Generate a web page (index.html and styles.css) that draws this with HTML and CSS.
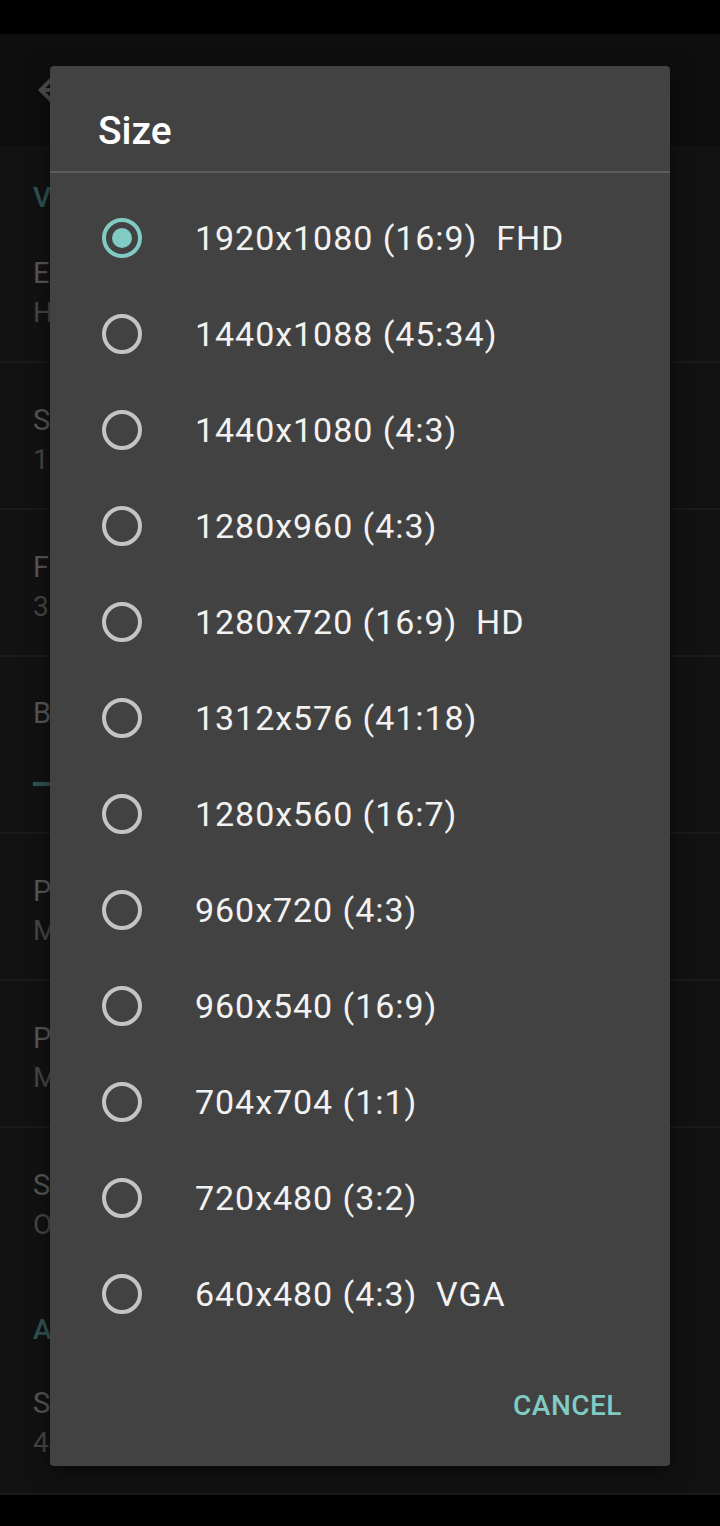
FILE: index.html
```html
<!DOCTYPE html>
<html lang="en">
<head>
<meta charset="UTF-8" />
<meta name="viewport" content="width=device-width, initial-scale=1" />
<title>Video settings</title>
<link rel="stylesheet" href="styles.css">
</head>
<body>

<div class="status-bar"></div>

<!-- App bar (dimmed behind dialog) -->
<header class="app-bar">
  <svg class="back-icon" viewBox="0 0 24 24" fill="#4f4f4f">
    <path d="M20 11H7.83l5.59-5.59L12 4l-8 8 8 8 1.41-1.41L7.83 13H20v-2z"/>
  </svg>
  <span class="app-title">Video settings</span>
</header>

<main class="settings">
  <div class="section-head first">Video</div>
  <div class="pref"><div class="pref-title">Encoder</div><div class="pref-sub">H.264</div></div>
  <div class="pref"><div class="pref-title">Size</div><div class="pref-sub">1920x1080</div></div>
  <div class="pref"><div class="pref-title">Frame rate</div><div class="pref-sub">30 fps</div></div>
  <div class="pref tall">
    <div class="pref-title">Bitrate</div>
    <div class="slider"><span class="slider-track"></span><span class="slider-thumb"></span></div>
  </div>
  <div class="pref"><div class="pref-title">Profile</div><div class="pref-sub">Main</div></div>
  <div class="pref"><div class="pref-title">Preview format</div><div class="pref-sub">MJPEG</div></div>
  <div class="pref last"><div class="pref-title">Stabilization</div><div class="pref-sub">Off</div></div>
  <div class="section-head">Audio</div>
  <div class="pref last"><div class="pref-title">Sample rate</div><div class="pref-sub">44100 Hz</div></div>
</main>

<div class="nav-bar"></div>

<!-- Size dialog -->
<div class="dialog">
  <h2 class="dialog-title">Size</h2>
  <ul class="options">
    <li class="option checked"><span class="radio"></span><span class="label">1920x1080 (16:9)  FHD</span></li>
    <li class="option"><span class="radio"></span><span class="label">1440x1088 (45:34)</span></li>
    <li class="option"><span class="radio"></span><span class="label">1440x1080 (4:3)</span></li>
    <li class="option"><span class="radio"></span><span class="label">1280x960 (4:3)</span></li>
    <li class="option"><span class="radio"></span><span class="label">1280x720 (16:9)  HD</span></li>
    <li class="option"><span class="radio"></span><span class="label">1312x576 (41:18)</span></li>
    <li class="option"><span class="radio"></span><span class="label">1280x560 (16:7)</span></li>
    <li class="option"><span class="radio"></span><span class="label">960x720 (4:3)</span></li>
    <li class="option"><span class="radio"></span><span class="label">960x540 (16:9)</span></li>
    <li class="option"><span class="radio"></span><span class="label">704x704 (1:1)</span></li>
    <li class="option"><span class="radio"></span><span class="label">720x480 (3:2)</span></li>
    <li class="option"><span class="radio"></span><span class="label">640x480 (4:3)  VGA</span></li>
  </ul>
  <div class="dialog-actions">
    <button class="text-btn">CANCEL</button>
  </div>
</div>

</body>
</html>
```

FILE: styles.css
```css
/* Page frame */
* {
  box-sizing: border-box;
}

body {
  margin: 0;
  width: 720px;
  height: 1526px;
  overflow: hidden;
  background: #121212;
  font-family: Roboto, "Noto Sans", sans-serif;
  position: relative;
}

.status-bar {
  height: 34px;
  background: #000;
}

.app-bar {
  height: 112px;
  background: #0e0e0e;
  display: flex;
  align-items: center;
  padding-left: 30px;
}

.back-icon {
  width: 48px;
  height: 48px;
}

.app-title {
  margin-left: 60px;
  color: #4a4a4a;
  font-size: 36px;
}

/* Settings list behind the dialog */
.settings {
  background: #121212;
}

.section-head {
  height: 71px;
  padding: 35px 0 0 33px;
  font-size: 28px;
  line-height: 40px;
  font-weight: 500;
  color: #2f5653;
}
.section-head.first {
  height: 70px;
  padding-top: 32px;
}

.pref {
  height: 147px;
  padding: 37px 0 0 33px;
  border-bottom: 2px solid #1b1b1b;
}
.pref.tall {
  height: 177px;
  padding-top: 36px;
}
.pref.last {
  border-bottom: none;
}

.pref-title {
  font-size: 29px;
  line-height: 40px;
  color: #585858;
}

.pref-sub {
  font-size: 28px;
  line-height: 40px;
  color: #474747;
}

.slider {
  display: flex;
  align-items: center;
  margin-top: 41px;
  height: 20px;
}
.slider-track {
  width: 20px;
  height: 4px;
  background: #2e5552;
}
.slider-thumb {
  width: 20px;
  height: 20px;
  border-radius: 50%;
  background: #2e5552;
}

.nav-bar {
  height: 33px;
  background: #000;
  border-top: 2px solid #1a1a1a;
}

/* Dialog (overlay) */
.dialog {
  position: absolute;
  top: 66px;
  left: 50px;
  width: 620px;
  height: 1400px;
  background: #424242;
  border-radius: 4px;
  box-shadow: 0 8px 24px rgba(0, 0, 0, 0.5);
  display: flex;
  flex-direction: column;
}

.dialog-title {
  margin: 0;
  height: 107px;
  padding: 40px 0 0 48px;
  font-size: 39px;
  line-height: 50px;
  font-weight: 500;
  color: #fff;
  border-bottom: 2px solid #5c5c5c;
}

.options {
  list-style: none;
  margin: 0;
  padding: 17px 0 0 0;
}

.option {
  height: 96px;
  display: flex;
  align-items: center;
  padding-left: 52px;
}

.radio {
  width: 40px;
  height: 40px;
  border-radius: 50%;
  border: 4px solid #c4c4c4;
  display: flex;
  align-items: center;
  justify-content: center;
  flex-shrink: 0;
}
.option.checked .radio {
  border-color: #80cbc4;
}
.option.checked .radio::after {
  content: "";
  width: 20px;
  height: 20px;
  border-radius: 50%;
  background: #80cbc4;
}

.label {
  margin-left: 53px;
  font-size: 34px;
  letter-spacing: 0.95px;
  color: #f2f2f2;
  white-space: pre;
}

.dialog-actions {
  margin-top: auto;
  display: flex;
  justify-content: flex-end;
  padding: 0 36px 32px 0;
}

.text-btn {
  background: none;
  border: none;
  padding: 12px;
  font-family: Roboto, "Noto Sans", sans-serif;
  font-size: 28px;
  font-weight: 500;
  letter-spacing: 0.5px;
  color: #80cbc4;
}
```
